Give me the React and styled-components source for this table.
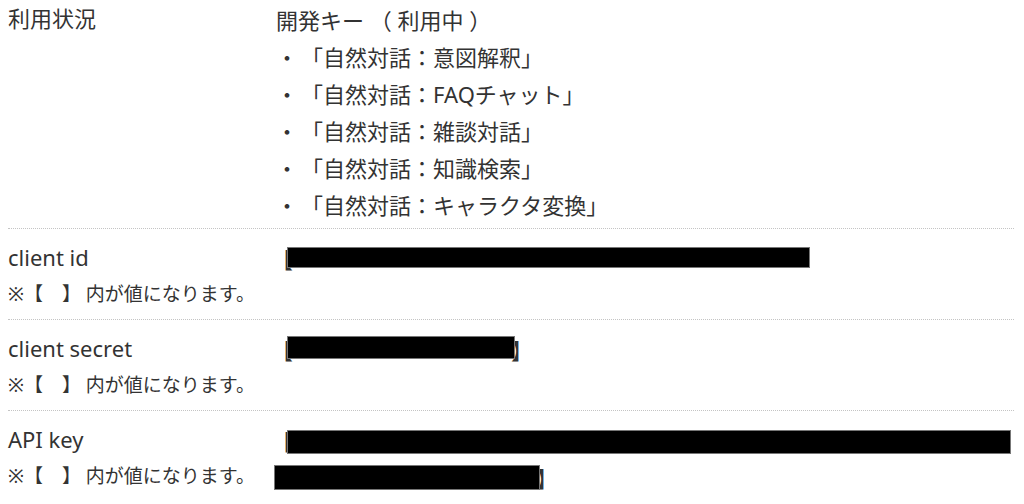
import React from "react";
import styled, { createGlobalStyle } from "styled-components";

const Global = createGlobalStyle`
  html, body { margin: 0; padding: 0; background: #fff; }
  body {
    font-family: "Noto Sans", "Noto Sans CJK JP", sans-serif;
    color: #333;
  }
`;

const Table = styled.div`
  margin: 0 10px 0 8px;
`;

const Row = styled.div`
  display: grid;
  grid-template-columns: 268px 1fr;
  padding: 10px 0 6px;
  border-bottom: 1px dotted #c4c4c4;
  &:first-child { padding-top: 0; }
  &:last-child { border-bottom: none; }
`;

const LabelCell = styled.div`
  display: flex;
  flex-direction: column;
`;

const Label = styled.div`
  font-size: 22px;
  line-height: 37px;
  white-space: nowrap;
`;

const Note = styled.div`
  font-size: 19px;
  line-height: 37px;
  white-space: nowrap;
`;

const ValueCell = styled.div`
  display: flex;
  flex-direction: column;
  min-width: 0;
`;

const Line = styled.div`
  display: flex;
  align-items: center;
  height: 37px;
  font-size: 22px;
  white-space: pre;
`;

const Bullet = styled.span`
  margin-right: 3px;
`;

const Open = styled.span`
  margin-left: -5px;
  margin-right: -6px;
`;

const Close = styled.span`
  margin-left: -4px;
`;

const Redact = styled.span`
  display: inline-block;
  position: relative;
  background: #000;
  border: 1px solid #777;
  box-sizing: border-box;
  width: ${(p) => p.$w}px;
  height: ${(p) => p.$h}px;
  margin-left: ${(p) => p.$ml || 0}px;
  margin-top: ${(p) => p.$mt || 0}px;
`;

const services = ["意図解釈", "FAQチャット", "雑談対話", "知識検索", "キャラクタ変換"];

const NOTE = "※【　】 内が値になります。";

export default function App() {
  return (
    <>
      <Global />
      <Table>
        <Row>
          <LabelCell>
            <Label>利用状況</Label>
          </LabelCell>
          <ValueCell>
            <Line>開発キー （ 利用中 ）</Line>
            {services.map((s) => (
              <Line key={s}>
                <Bullet>・</Bullet>「自然対話：{s}」
              </Line>
            ))}
          </ValueCell>
        </Row>
        <Row>
          <LabelCell>
            <Label>client id</Label>
            <Note>{NOTE}</Note>
          </LabelCell>
          <ValueCell>
            <Line>
              <Open>【</Open>
              <Redact $w={523} $h={21} />
            </Line>
          </ValueCell>
        </Row>
        <Row>
          <LabelCell>
            <Label>client secret</Label>
            <Note>{NOTE}</Note>
          </LabelCell>
          <ValueCell>
            <Line>
              <Open>【</Open>
              <Redact $w={228} $h={23} $mt={-2} />
              <Close>】</Close>
            </Line>
          </ValueCell>
        </Row>
        <Row>
          <LabelCell>
            <Label>API key</Label>
            <Note>{NOTE}</Note>
          </LabelCell>
          <ValueCell>
            <Line>
              <Open>【</Open>
              <Redact $w={724} $h={24} $mt={5} />
            </Line>
            <Line>
              <Redact $w={266} $h={25} $ml={-2} $mt={2} />
              <Close>】</Close>
            </Line>
          </ValueCell>
        </Row>
      </Table>
    </>
  );
}
